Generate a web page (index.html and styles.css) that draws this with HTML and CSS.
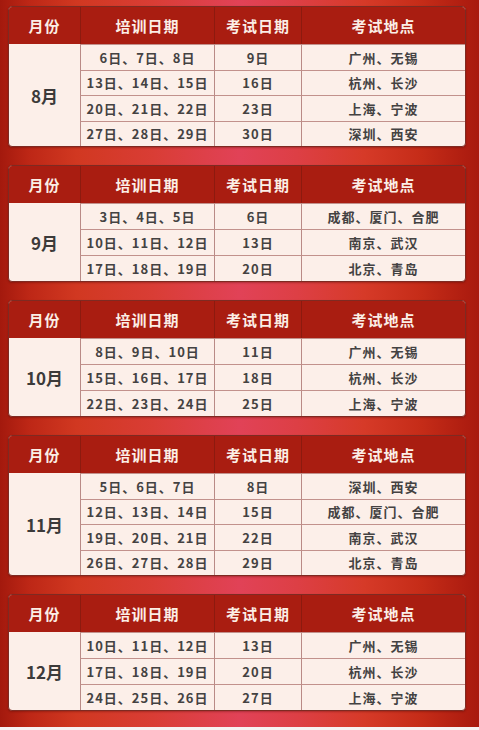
FILE: index.html
```html
<!DOCTYPE html>
<html lang="zh-CN">
<head>
<meta charset="utf-8">
<title>培训考试安排</title>
<link rel="stylesheet" href="styles.css">
</head>
<body>
<main class="page">
  <section class="tbl rows-4">
    <div class="h first">月份</div><div class="h">培训日期</div><div class="h">考试日期</div><div class="h">考试地点</div>
    <div class="month">8月</div>
    <div class="c">6日、7日、8日</div><div class="c">9日</div><div class="c">广州、无锡</div>
    <div class="c">13日、14日、15日</div><div class="c">16日</div><div class="c">杭州、长沙</div>
    <div class="c">20日、21日、22日</div><div class="c">23日</div><div class="c">上海、宁波</div>
    <div class="c">27日、28日、29日</div><div class="c">30日</div><div class="c">深圳、西安</div>
  </section>
  <section class="tbl rows-3">
    <div class="h first">月份</div><div class="h">培训日期</div><div class="h">考试日期</div><div class="h">考试地点</div>
    <div class="month">9月</div>
    <div class="c">3日、4日、5日</div><div class="c">6日</div><div class="c">成都、厦门、合肥</div>
    <div class="c">10日、11日、12日</div><div class="c">13日</div><div class="c">南京、武汉</div>
    <div class="c">17日、18日、19日</div><div class="c">20日</div><div class="c">北京、青岛</div>
  </section>
  <section class="tbl rows-3">
    <div class="h first">月份</div><div class="h">培训日期</div><div class="h">考试日期</div><div class="h">考试地点</div>
    <div class="month">10月</div>
    <div class="c">8日、9日、10日</div><div class="c">11日</div><div class="c">广州、无锡</div>
    <div class="c">15日、16日、17日</div><div class="c">18日</div><div class="c">杭州、长沙</div>
    <div class="c">22日、23日、24日</div><div class="c">25日</div><div class="c">上海、宁波</div>
  </section>
  <section class="tbl rows-4">
    <div class="h first">月份</div><div class="h">培训日期</div><div class="h">考试日期</div><div class="h">考试地点</div>
    <div class="month">11月</div>
    <div class="c">5日、6日、7日</div><div class="c">8日</div><div class="c">深圳、西安</div>
    <div class="c">12日、13日、14日</div><div class="c">15日</div><div class="c">成都、厦门、合肥</div>
    <div class="c">19日、20日、21日</div><div class="c">22日</div><div class="c">南京、武汉</div>
    <div class="c">26日、27日、28日</div><div class="c">29日</div><div class="c">北京、青岛</div>
  </section>
  <section class="tbl rows-3">
    <div class="h first">月份</div><div class="h">培训日期</div><div class="h">考试日期</div><div class="h">考试地点</div>
    <div class="month">12月</div>
    <div class="c">10日、11日、12日</div><div class="c">13日</div><div class="c">广州、无锡</div>
    <div class="c">17日、18日、19日</div><div class="c">20日</div><div class="c">杭州、长沙</div>
    <div class="c">24日、25日、26日</div><div class="c">27日</div><div class="c">上海、宁波</div>
  </section>
</main>
</body>
</html>
```
FILE: styles.css
```css
html, body {
  margin: 0;
  padding: 0;
  background: #f6f2f2;
}
body {
  font-family: "Noto Sans CJK SC", "Noto Sans", sans-serif;
}
.page {
  box-sizing: border-box;
  width: 479px;
  height: 727px;
  padding: 6px 13px 0 8px;
  display: flex;
  flex-direction: column;
  gap: 18px;
  background: linear-gradient(90deg, #a3190d 0%, #bd2716 6%, #d13821 16%, #d93d35 32%, #e14257 50%, #dd3f45 62%, #d63a28 76%, #c52c18 88%, #a8190e 100%);
}
.tbl {
  box-sizing: border-box;
  width: 458px;
  display: grid;
  grid-template-columns: 71px 134px 87px 1fr;
  border: 1px solid #7e2a22;
  border-radius: 4px;
  overflow: hidden;
  background: #fcefe9;
  box-shadow: 0 1px 2px rgba(80, 10, 5, 0.35);
}
.rows-4 {
  height: 141px;
  grid-template-rows: 37px repeat(4, 1fr);
}
.rows-3 {
  height: 117px;
  grid-template-rows: 37px repeat(3, 1fr);
}
.h {
  background: #a91d11;
  color: #fbeee6;
  font-size: 15px;
  font-weight: 700;
  letter-spacing: 1px;
  display: flex;
  align-items: center;
  justify-content: center;
  border-left: 1px solid #8c1a0f;
}
.h.first {
  border-left: none;
}
.month {
  grid-column: 1;
  grid-row: 2 / -1;
  display: flex;
  align-items: center;
  justify-content: center;
  font-size: 17px;
  font-weight: 700;
  color: #3c3a3a;
}
.c {
  display: flex;
  align-items: center;
  justify-content: center;
  font-size: 13px;
  font-weight: 700;
  letter-spacing: 1px;
  color: #444242;
  border-left: 1px solid #b98a86;
  border-top: 1px solid #c2918c;
}
```
